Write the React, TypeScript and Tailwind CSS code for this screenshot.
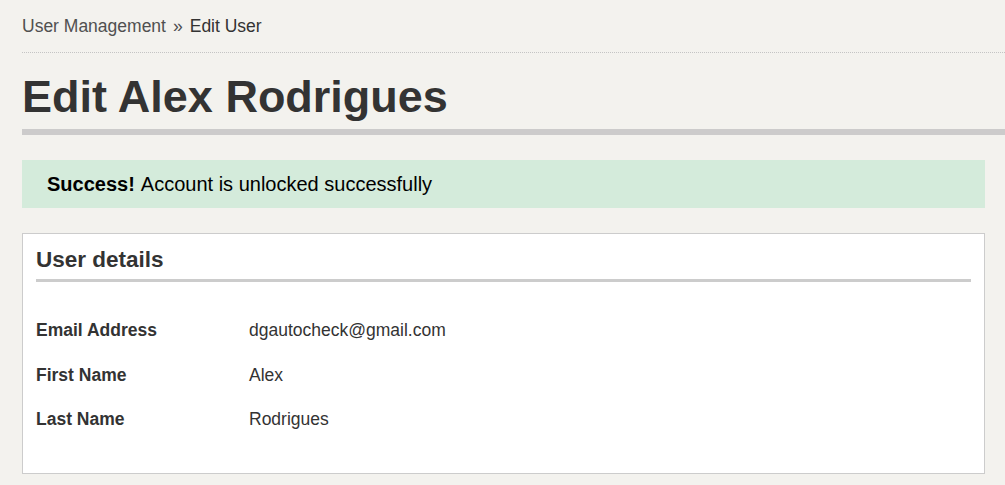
import React from 'react';

const rows = [
  { label: 'Email Address', value: 'dgautocheck@gmail.com' },
  { label: 'First Name', value: 'Alex' },
  { label: 'Last Name', value: 'Rodrigues' },
];

const App: React.FC = () => {
  return (
    <div
      className="min-h-screen bg-[#f3f2ee] pl-[22px] text-[#333333]"
      style={{ fontFamily: '"Liberation Sans", Arial, sans-serif' }}
    >
      {/* Breadcrumb */}
      <nav className="flex items-center gap-[7px] pt-[15px] pb-[15px] text-[17.5px] leading-[22px] border-b border-dotted border-[#c4c4c4]">
        <a href="#" className="text-[#505050]">User Management</a>
        <span className="text-[#505050]">»</span>
        <span className="text-[#333333]">Edit User</span>
      </nav>

      {/* Page title */}
      <h1 className="mt-[21px] pb-[10px] text-[45px] leading-[45px] font-bold border-b-[6px] border-[#cccbcb]">
        Edit Alex Rodrigues
      </h1>

      <div className="pr-[20px]">
        {/* Alert */}
        <div className="mt-[25px] h-[48px] flex items-center pl-[25px] bg-[#d4ebdb] text-[20px] text-black">
          <strong className="font-bold">Success!</strong>
          <span className="ml-[6px]">Account is unlocked successfully</span>
        </div>

        {/* User details card */}
        <section className="mt-[25px] bg-white border border-[#cccccc] px-[13px] pt-[12px] pb-[31.5px]">
          <h2 className="text-[22.5px] leading-[27px] font-bold pb-[6px] border-b-[3px] border-[#cccccc]">
            User details
          </h2>
          <dl className="mt-[26px]">
            {rows.map((r) => (
              <div key={r.label} className="flex items-center h-[44.5px] text-[17.5px]">
                <dt className="w-[213px] font-bold">{r.label}</dt>
                <dd>{r.value}</dd>
              </div>
            ))}
          </dl>
        </section>
      </div>
    </div>
  );
};

export default App;
